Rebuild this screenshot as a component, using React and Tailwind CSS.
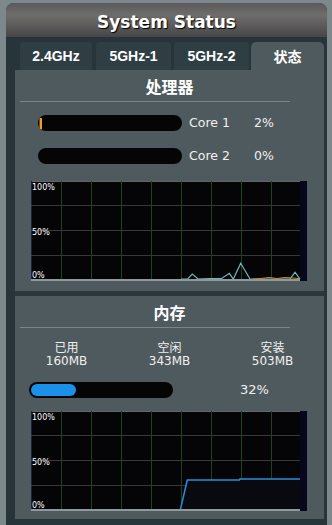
import React from "react";

const VX = [30.5, 60.5, 90.5, 120.5, 150.5, 180.5, 210.5, 240.5];
const HY = [24.5, 49.5, 74.5];

function Chart({ children }) {
  return (
    <div className="relative ml-[16px] w-[276px] h-[100px] bg-[#050507]">
      <svg width="276" height="100" viewBox="0 0 276 100" className="absolute left-0 top-0">
        <rect x="269" y="0" width="7" height="100" fill="#07071b" />
        <line x1="0" y1="0.5" x2="269" y2="0.5" stroke="#5d6669" strokeWidth="1" />
        <line x1="0.5" y1="0" x2="0.5" y2="99" stroke="#1b2240" strokeWidth="1" />
        {HY.map((y) => (
          <line key={y} x1="0" y1={y} x2="269" y2={y} stroke="#383838" strokeWidth="1" />
        ))}
        {VX.map((x) => (
          <line key={x} x1={x} y1="0" x2={x} y2="99" stroke="#1f4221" strokeWidth="1" />
        ))}
        {children}
        <line x1="0" y1="99" x2="269" y2="99" stroke="#8e999c" strokeWidth="2" />
      </svg>
      <span className="absolute left-[1px] top-[2px] text-[8px] leading-[10px] text-white font-['DejaVu_Sans',sans-serif]">100%</span>
      <span className="absolute left-[1px] top-[47px] text-[8px] leading-[10px] text-white font-['DejaVu_Sans',sans-serif]">50%</span>
      <span className="absolute left-[1px] top-[90px] text-[8px] leading-[10px] text-white font-['DejaVu_Sans',sans-serif]">0%</span>
    </div>
  );
}

function SectionTitle({ children }) {
  return (
    <>
      <div className="pt-[6px] h-[26px] flex justify-center">
        <span className="text-[16px] leading-[20px] font-bold text-white font-['Noto_Sans_CJK_SC',sans-serif]">
          {children}
        </span>
      </div>
      <div className="mt-[5px] ml-[5px] w-[270px] h-px bg-[#7a8589]" />
    </>
  );
}

function CoreRow({ label, pct, fill, className }) {
  return (
    <div className={"flex items-center h-[16px] " + className}>
      <div className="ml-[23px] w-[144px] h-[16px] rounded-full bg-[#050505] flex items-center pl-[1px]">
        {fill ? <div className="w-[3px] h-[11px] bg-[#f39a22] border-l border-[#7a4a10]" /> : null}
      </div>
      <span className="ml-[7px] w-[65px] text-[12.5px] leading-[16px] text-[#f0f0f0] font-['DejaVu_Sans',sans-serif]">
        {label}
      </span>
      <span className="text-[12.5px] leading-[16px] text-[#f0f0f0] font-['DejaVu_Sans',sans-serif]">{pct}</span>
    </div>
  );
}

function MemCol({ label, value }) {
  return (
    <div className="flex flex-col items-center text-[#f0f0f0]">
      <span className="text-[12px] leading-[15px] font-['Noto_Sans_CJK_SC',sans-serif]">{label}</span>
      <span className="text-[12px] leading-[15px] font-['DejaVu_Sans',sans-serif]">{value}</span>
    </div>
  );
}

export default function App() {
  return (
    <div className="w-[332px] h-[525px] overflow-hidden bg-[#7c888b] pt-[3px] pl-[6px]">
      <div className="w-[321px] h-[522px] flex flex-col rounded-t-[8px] overflow-hidden bg-[#27353a]">
        <div className="h-[34px] shrink-0 flex items-center justify-center pt-[4px] bg-[linear-gradient(to_bottom,#5b5959_0%,#6f6d6c_35%,#5a5858_70%,#464646_100%)]">
          <span className="text-[17px] leading-[20px] font-bold text-white font-['DejaVu_Sans',sans-serif] [text-shadow:1px_1px_1px_#000]">
            System Status
          </span>
        </div>
        <div className="pt-[5px] flex flex-col">
          <div className="flex h-[28px] pl-[14px] font-['Liberation_Sans','Noto_Sans_CJK_SC',sans-serif] text-[14px] font-bold text-white">
            <div className="w-[72px] flex items-center justify-center rounded-t-[3px] bg-[#2f3e43]">2.4GHz</div>
            <div className="ml-[4px] w-[75px] flex items-center justify-center rounded-t-[3px] bg-[#2f3e43]">5GHz-1</div>
            <div className="ml-[3px] w-[75px] flex items-center justify-center rounded-t-[3px] bg-[#2f3e43]">5GHz-2</div>
            <div className="ml-[2px] w-[73px] flex items-center justify-center rounded-t-[5px] bg-[#4f5a5e]">
              <span className="font-['Noto_Sans_CJK_SC',sans-serif]">状态</span>
            </div>
          </div>
          <div className="ml-[9px] w-[309px] flex flex-col">
            <div className="h-[221px] bg-[#4f5a5e] flex flex-col">
              <SectionTitle>处理器</SectionTitle>
              <CoreRow label="Core 1" pct="2%" fill className="mt-[13px]" />
              <CoreRow label="Core 2" pct="0%" className="mt-[17px]" />
              <div className="mt-[17px]">
                <Chart>
                  <polyline
                    points="150,98 156.7,98 161.3,93 167,98 178,97.5 190.7,97.5 198.3,92.3 202.3,98 209.7,82.3 219,98 259,98 264,91.3 269,98"
                    fill="none"
                    stroke="#6fbab8"
                    strokeWidth="1.2"
                  />
                  <polyline
                    points="222,98 230,97.5 238,96.5 246,97.5 254,96.5 262,97 268,97.5"
                    fill="none"
                    stroke="#d98a2a"
                    strokeWidth="1"
                  />
                </Chart>
              </div>
            </div>
            <div className="h-[5px] bg-[#2a383d]" />
            <div className="h-[223px] bg-[#4f5a5e] flex flex-col">
              <SectionTitle>内存</SectionTitle>
              <div className="mt-[11px] grid grid-cols-3">
                <MemCol label="已用" value="160MB" />
                <MemCol label="空闲" value="343MB" />
                <MemCol label="安装" value="503MB" />
              </div>
              <div className="mt-[13px] flex items-center h-[16px]">
                <div className="ml-[14px] w-[144px] h-[16px] rounded-full bg-[#050505] flex items-center pl-[2px]">
                  <div className="w-[45px] h-[12px] rounded-full bg-[#1a90e8]" />
                </div>
                <span className="ml-[67px] text-[13px] leading-[16px] text-[#f0f0f0] font-['DejaVu_Sans',sans-serif]">32%</span>
              </div>
              <div className="mt-[13px]">
                <Chart>
                  <polygon points="149.3,99 156.3,69 208.3,69 209,68 269,68 269,99" fill="#080a10" />
                  <polyline
                    points="149.3,99 156.3,69 208.3,69 209,68 269,68"
                    fill="none"
                    stroke="#2a8fd6"
                    strokeWidth="1.5"
                  />
                </Chart>
              </div>
            </div>
          </div>
        </div>
      </div>
    </div>
  );
}
